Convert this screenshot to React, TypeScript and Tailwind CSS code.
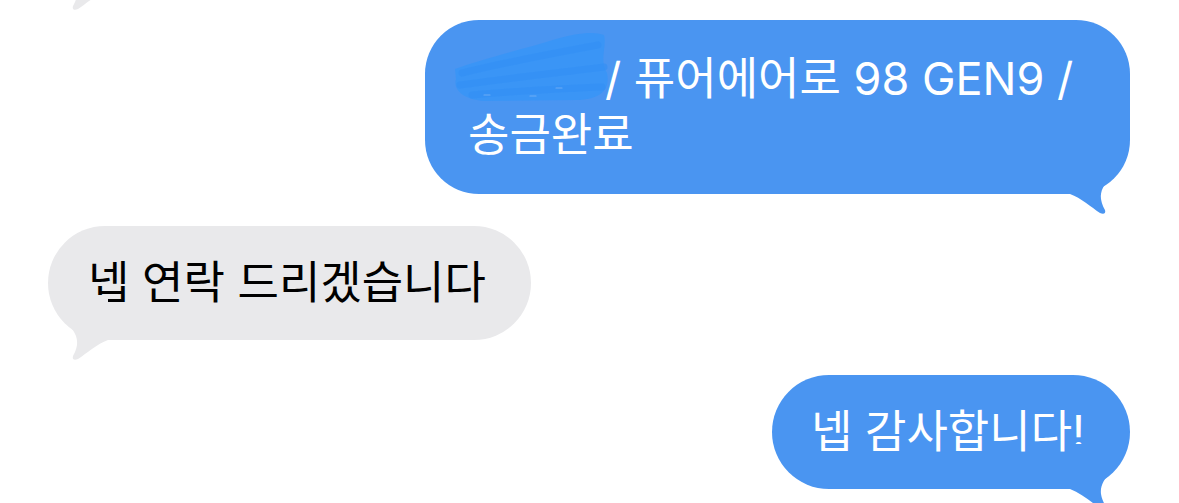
import React from "react";

const BLUE = "#4a95f1";
const GREY = "#e9e9eb";

// iMessage style tail, drawn for the right side; mirrored for the left
const Tail = ({ color, side }: { color: string; side: "left" | "right" }) => (
  <svg
    width="60"
    height="66"
    viewBox="0 0 60 66"
    className={
      side === "right"
        ? "absolute right-0 bottom-[-21px]"
        : "absolute left-0 bottom-[-21px] scale-x-[-1]"
    }
  >
    <path
      d="M0,0 L56,0 C54,12 48,21 41,28 C34,35 30,42 31,50 C32,56 34,59 35,61 C36,64 34,66 30,64 C21,58 11,49 0,45 Z"
      fill={color}
    />
  </svg>
);

// blue scribble hiding a name
const Scribble = () => (
  <svg
    width="160"
    height="72"
    viewBox="0 0 160 72"
    className="absolute left-[-16px] top-[-32px]"
  >
    <path
      d="M3,38 C30,28 72,18 104,8 C124,2 142,0 152,4 C155,16 147,28 155,42 C158,56 152,68 126,69 L32,70 C10,68 1,58 4,48 Z"
      fill="#3a95f6"
    />
    <path
      d="M10,42 C50,32 92,24 146,14 M8,54 C50,48 104,42 152,36 M20,64 C60,60 104,58 150,56"
      stroke="#3290f5"
      strokeWidth="7"
      strokeLinecap="round"
      fill="none"
      opacity="0.6"
    />
    <path
      d="M32,64 L38,64 M78,65 L84,65 M104,57 L110,57"
      stroke="#8fc0f8"
      strokeWidth="1.2"
      strokeLinecap="round"
      opacity="0.6"
    />
  </svg>
);

export default function App() {
  return (
    <div className="flex h-[503px] w-full flex-col overflow-hidden bg-white font-['Inter','Noto_Sans_CJK_KR',sans-serif] text-[45px] leading-[56px]">
      {/* tail of the previous message, scrolled off the top */}
      <div className="relative -mt-[110px] ml-[48px] h-[100px] w-[300px] self-start rounded-[54px] bg-[#e9e9eb]">
        <Tail color={GREY} side="left" />
      </div>

      <div className="relative mt-[30px] mr-[49px] w-[705px] self-end rounded-[54px] bg-[#4a95f1] py-[31px] pl-[43px] text-white">
        <span className="relative inline-block h-[40px] w-[137px] align-middle">
          <Scribble />
        </span>
        / 퓨어에어로 98 GEN9 /
        <br />
        송금완료
        <Tail color={BLUE} side="right" />
      </div>

      <div className="relative mt-[32px] ml-[48px] self-start rounded-[57px] bg-[#e9e9eb] py-[29px] pr-[45px] pl-[40px] text-black">
        넵 연락 드리겠습니다
        <Tail color={GREY} side="left" />
      </div>

      <div className="relative mt-[35px] mr-[49px] self-end rounded-[57px] bg-[#4a95f1] py-[29px] pr-[45px] pl-[39px] text-white">
        넵 감사합니다!
        <Tail color={BLUE} side="right" />
      </div>
    </div>
  );
}
